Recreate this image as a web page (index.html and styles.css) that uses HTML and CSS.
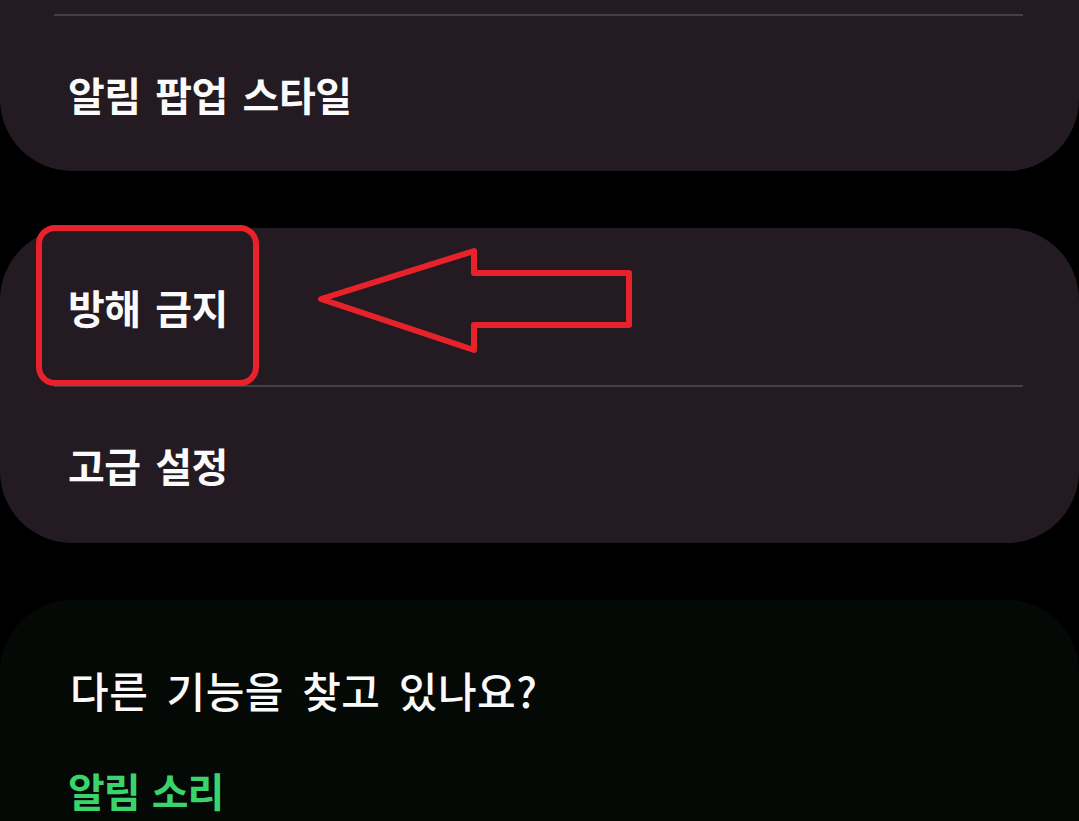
FILE: index.html
```html
<!DOCTYPE html>
<html lang="ko">
<head>
    <meta charset="UTF-8">
    <title>알림 설정</title>
    <link rel="stylesheet" href="styles.css">
</head>
<body>

<div class="screen">
    <!-- 위쪽 그룹 (잘려서 보임) -->
    <section class="card card--top">
        <div class="card__divider"></div>
        <div class="card__row">알림 팝업 스타일</div>
    </section>

    <section class="card">
        <div class="card__row card__row--first">방해 금지</div>
        <div class="card__divider"></div>
        <div class="card__row">고급 설정</div>
    </section>

    <section class="card card--suggest">
        <h2 class="suggest__title">다른 기능을 찾고 있나요?</h2>
        <a class="suggest__link">알림 소리</a>
    </section>

    <!-- 빨간 표시 (스크린샷 위에 그린 것) -->
    <svg class="marker" width="1079" height="821" viewBox="0 0 1079 821">
        <rect x="39" y="228" width="217" height="155" rx="16" ry="16"/>
        <polygon points="321,299 474,251 474,273 629,273 629,325 474,325 474,350"/>
    </svg>
</div>

</body>
</html>
```

FILE: styles.css
```css
* {
    box-sizing: border-box;
    margin: 0;
    padding: 0;
}

:root {
    --bg: #000;
    --card: #231b21;
    --card-suggest: #040906;
    --divider: #463e46;
    --text: #fafafa;
    --accent: #3ad46c;
    --mark: #e8212b;
    --radius: 72px;
}

body {
    background-color: var(--bg);
    color: var(--text);
    font-family: "Noto Sans CJK KR", "Noto Sans", sans-serif;
    overflow: hidden;
}

.screen {
    position: relative;
    display: flex;
    flex-direction: column;
    gap: 57px;
    height: 821px;
    overflow: hidden;
}

.card {
    background-color: var(--card);
    border-radius: var(--radius);
    flex-shrink: 0;
}

.card--top {
    border-radius: 0 0 var(--radius) var(--radius);
    padding-top: 14px;
}

.card__divider {
    height: 2px;
    margin: 0 56px 0 54px;
    background-color: var(--divider);
}

.card__row {
    display: flex;
    align-items: center;
    height: 156px;
    padding-left: 68px;
    font-size: 40px;
    font-weight: 700;
    word-spacing: 4px;
    letter-spacing: -0.5px;
}

.card--top .card__row {
    height: 155px;
}

.card__row--first {
    height: 157px;
}

/* 다른 기능 찾기 */
.card--suggest {
    background-color: var(--card-suggest);
    padding: 62px 0 3px 68px;
    border-radius: var(--radius) var(--radius) 0 0;
}

.suggest__title {
    font-size: 42px;
    font-weight: 500;
    line-height: 56px;
    word-spacing: 6px;
    letter-spacing: 0.5px;
    padding-left: 2px;
}

.suggest__link {
    display: block;
    margin-top: 44px;
    color: var(--accent);
    font-size: 40px;
    font-weight: 700;
    line-height: 56px;
    letter-spacing: -1px;
    word-spacing: 2px;
}

.marker {
    position: absolute;
    top: 0;
    left: 0;
    pointer-events: none;
}

.marker rect,
.marker polygon {
    fill: none;
    stroke: var(--mark);
    stroke-width: 6;
    stroke-linejoin: round;
}
```
